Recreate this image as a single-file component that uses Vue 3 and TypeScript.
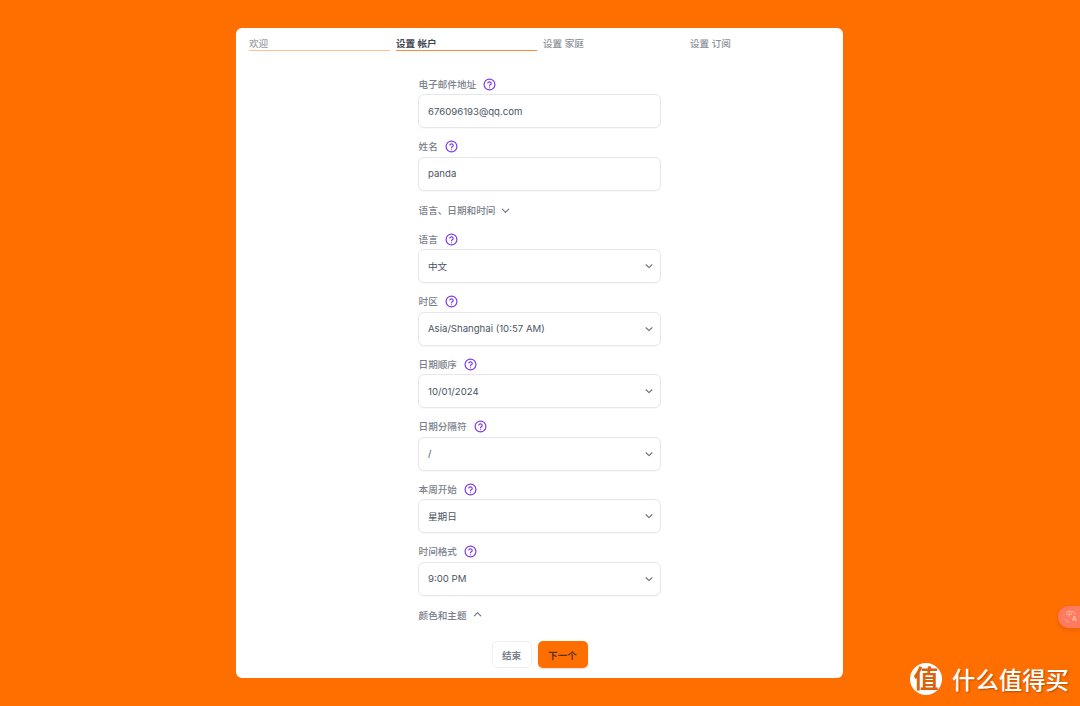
<script setup lang="ts">
interface Field { label: string; value: string; select: boolean }
const tabs = [
  { text: '欢迎', cls: 'done' },
  { text: '设置 帐户', cls: 'active' },
  { text: '设置 家庭', cls: '' },
  { text: '设置 订阅', cls: '' },
]
const top: Field[] = [
  { label: '电子邮件地址', value: '676096193@qq.com', select: false },
  { label: '姓名', value: 'panda', select: false },
]
const locale: Field[] = [
  { label: '语言', value: '中文', select: true },
  { label: '时区', value: 'Asia/Shanghai (10:57 AM)', select: true },
  { label: '日期顺序', value: '10/01/2024', select: true },
  { label: '日期分隔符', value: '/', select: true },
  { label: '本周开始', value: '星期日', select: true },
  { label: '时间格式', value: '9:00 PM', select: true },
]
</script>

<template>
  <div class="page">
    <main class="card">
      <nav class="tabs">
        <div v-for="t in tabs" :key="t.text" class="tab" :class="t.cls">{{ t.text }}</div>
      </nav>
      <form class="form">
        <div v-for="f in top" :key="f.label" class="field">
          <div class="label">
            <span>{{ f.label }}</span>
            <svg class="help" viewBox="0 0 24 24" fill="none" stroke="#7c3aed" stroke-width="2.2" stroke-linecap="round" stroke-linejoin="round">
              <circle cx="12" cy="12" r="10" />
              <path d="M8.8 9.2a3.3 3.3 0 0 1 6.4 1c0 2.2-3.2 2.6-3.2 4.3" />
              <path d="M12 18h.01" />
            </svg>
          </div>
          <div class="control">{{ f.value }}</div>
        </div>
        <div class="section">
          <span>语言、日期和时间</span>
          <svg class="sec-chev" viewBox="0 0 12 12" fill="none" stroke="#6b7280" stroke-width="1.2" stroke-linecap="round" stroke-linejoin="round"><path d="M2.5 4.5 6 8l3.5-3.5" /></svg>
        </div>
        <div v-for="f in locale" :key="f.label" class="field">
          <div class="label">
            <span>{{ f.label }}</span>
            <svg class="help" viewBox="0 0 24 24" fill="none" stroke="#7c3aed" stroke-width="2.2" stroke-linecap="round" stroke-linejoin="round">
              <circle cx="12" cy="12" r="10" />
              <path d="M8.8 9.2a3.3 3.3 0 0 1 6.4 1c0 2.2-3.2 2.6-3.2 4.3" />
              <path d="M12 18h.01" />
            </svg>
          </div>
          <div class="control select">
            <span>{{ f.value }}</span>
            <svg class="chev" viewBox="0 0 12 12" fill="none" stroke="#6b7280" stroke-width="1.3" stroke-linecap="round" stroke-linejoin="round"><path d="M2.5 4.5 6 8l3.5-3.5" /></svg>
          </div>
        </div>
        <div class="section last">
          <span>颜色和主题</span>
          <svg class="sec-chev" viewBox="0 0 12 12" fill="none" stroke="#6b7280" stroke-width="1.2" stroke-linecap="round" stroke-linejoin="round"><path d="M2.5 7.5 6 4l3.5 3.5" /></svg>
        </div>
        <div class="actions">
          <button type="button" class="btn ghost">结束</button>
          <button type="button" class="btn primary">下一个</button>
        </div>
      </form>
    </main>

    <div class="translate">
      <span class="t1">中</span><span class="t2">A</span>
      <svg class="t-arcs" viewBox="0 0 22 22" fill="none" stroke="#ffc4ad" stroke-width="0.8" stroke-linecap="round">
        <path d="M8 13.5c0 1.8 1 2.5 2.8 2.5" />
        <path d="M14 5.5c1.8 0 2.8.7 2.8 2.5" />
      </svg>
    </div>

    <div class="brand">
      <span class="seal">值</span>
      <span class="brand-name">什么值得买</span>
    </div>
  </div>
</template>

<style>
html, body { margin: 0; background: #ff6f00; }
</style>

<style scoped>
.page {
  position: relative;
  width: 1080px;
  height: 706px;
  overflow: hidden;
  background: #ff6f00;
  padding-top: 28px;
  box-sizing: border-box;
  font-family: Inter, "Noto Sans CJK SC", sans-serif;
}
.card {
  width: 607px;
  height: 650px;
  margin-left: 236px;
  background: #fff;
  border-radius: 6px;
  box-sizing: border-box;
  padding: 0 13px;
}
.tabs {
  display: grid;
  grid-template-columns: repeat(4, 141px);
  gap: 6px;
  height: 22px;
  padding-top: 8.5px;
}
.tab {
  height: 13px;
  line-height: 13px;
  font-size: 9.6px;
  font-weight: 500;
  color: #8b9099;
}
.tab.done {
  border-bottom: 1.5px solid #ffc08f;
  color: #9a9ea6;
}
.tab.active {
  border-bottom: 1.5px solid #ff8a3a;
  color: #3f4550;
  font-weight: 700;
}
.form {
  width: 243px;
  margin: 18px 0 0 169px;
  display: flex;
  flex-direction: column;
}
.field {
  height: 62.5px;
  display: flex;
  flex-direction: column;
}
.label {
  display: flex;
  align-items: center;
  gap: 7px;
  height: 15px;
  margin-bottom: 2.5px;
  padding-left: 0.6px;
  font-size: 9.6px;
  font-weight: 500;
  color: #7b818b;
  line-height: 15px;
}
.help {
  width: 13px;
  height: 13px;
}
.control {
  height: 34px;
  box-sizing: border-box;
  border: 1px solid #e5e7eb;
  border-radius: 6px;
  padding: 0 9px;
  display: flex;
  align-items: center;
  font-size: 9.6px;
  color: #4b5563;
  box-shadow: 0 1px 1px rgba(0, 0, 0, 0.03);
}
.select {
  justify-content: space-between;
}
.chev {
  width: 10px;
  height: 10px;
  margin-right: -3px;
}
.section {
  display: flex;
  align-items: center;
  gap: 5px;
  height: 15px;
  margin-top: 1px;
  margin-bottom: 14.4px;
  padding-left: 0.6px;
  font-size: 9.6px;
  font-weight: 500;
  color: #7b818b;
}
.section.last {
  margin-top: 0.6px;
  margin-bottom: 0;
}
.sec-chev {
  width: 11px;
  height: 11px;
}
.actions {
  display: flex;
  justify-content: center;
  gap: 6px;
  margin-top: 19px;
}
.btn {
  height: 27px;
  border-radius: 5px;
  font-family: inherit;
  font-size: 9.6px;
  font-weight: 600;
  padding: 0;
  box-sizing: border-box;
}
.ghost {
  width: 40px;
  background: #fff;
  border: 1px solid #eef0f3;
  color: #7b818b;
}
.primary {
  width: 50px;
  background: #ff6f00;
  border: 0;
  color: #5c3413;
  box-shadow: 0 1px 2px rgba(0, 0, 0, 0.15);
}
.translate {
  position: absolute;
  right: 0;
  top: 606px;
  width: 22px;
  height: 22px;
  background: #ff7a5e;
  border-radius: 11px 0 0 11px;
  box-shadow: 0 2px 5px rgba(150, 50, 0, 0.25);
  color: #ffc4ad;
  font-size: 6.5px;
  line-height: 7px;
}
.t1 { position: absolute; left: 8px; top: 5px; font-size: 6.5px; }
.t2 { position: absolute; left: 14px; top: 10px; font-size: 6.5px; font-weight: 700; }
.t-arcs { position: absolute; left: 0; top: 0; width: 22px; height: 22px; }
.brand {
  position: absolute;
  left: 910px;
  top: 663px;
  display: flex;
  align-items: center;
  gap: 10px;
  height: 32px;
}
.seal {
  width: 32px;
  height: 32px;
  border-radius: 50%;
  background: #fff;
  color: #d9630a;
  font-size: 25px;
  font-weight: 700;
  line-height: 32px;
  text-align: center;
}
.brand-name {
  font-size: 23.4px;
  font-weight: 500;
  color: #fff;
  text-shadow: 1px 1px 2px rgba(120, 50, 0, 0.55);
  white-space: nowrap;
}
</style>
